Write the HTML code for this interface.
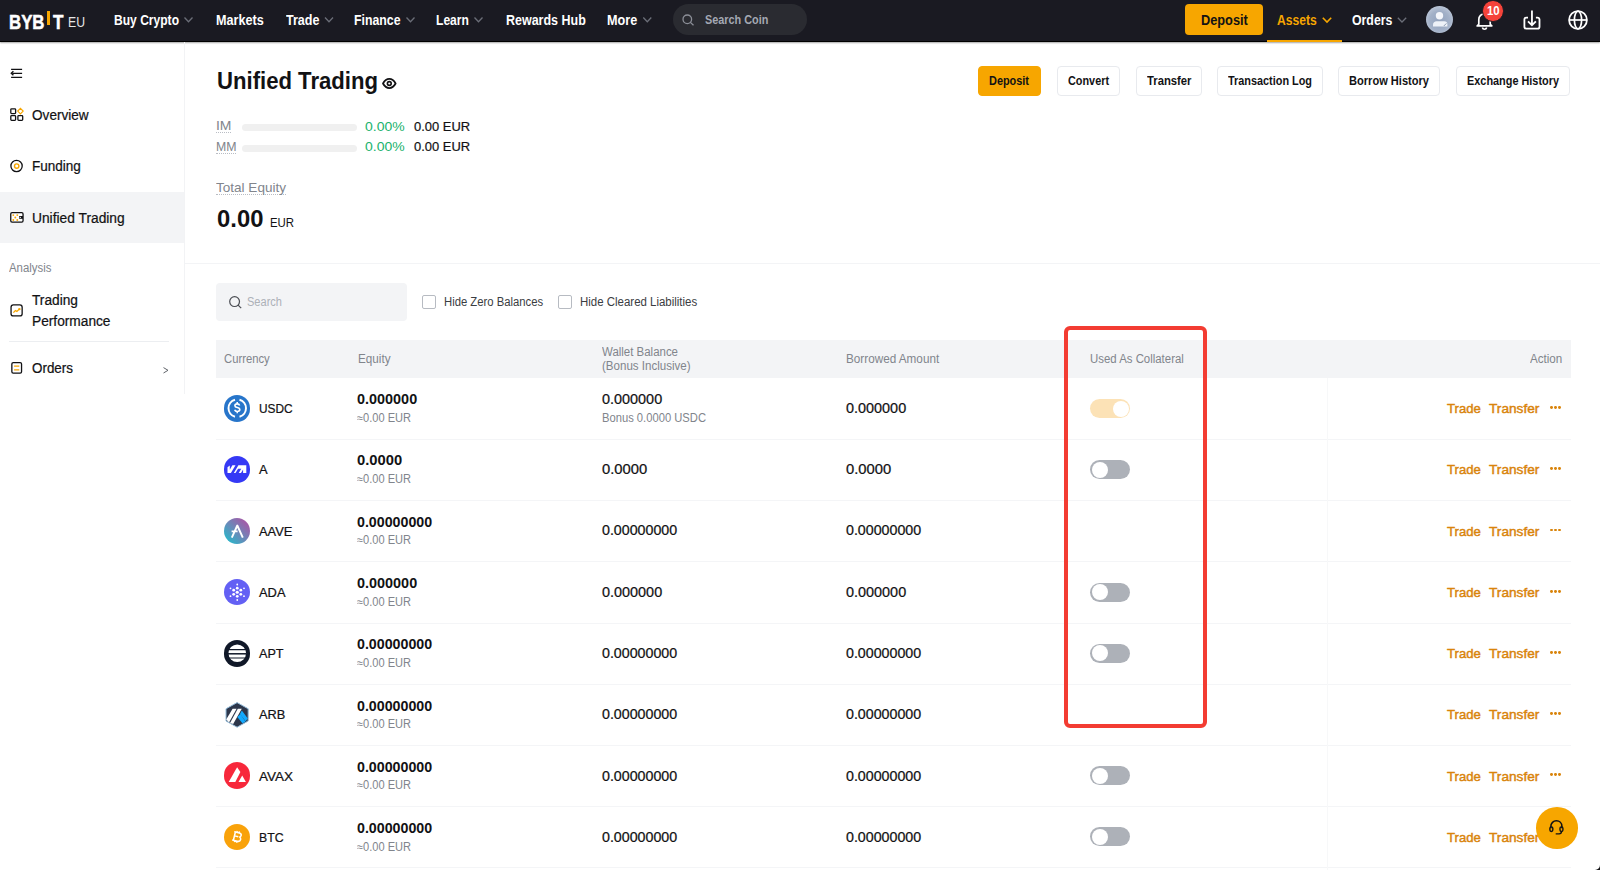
<!DOCTYPE html>
<html><head><meta charset="utf-8">
<style>
*{box-sizing:border-box;margin:0;padding:0}
html,body{width:1600px;height:870px;overflow:hidden;background:#fff}
body{position:relative;font-family:"Liberation Sans",sans-serif;color:#121214}
.a{position:absolute}
.t{position:absolute;white-space:nowrap;line-height:1;transform-origin:0 0}
svg{position:absolute;overflow:visible}
.hdr{left:0;top:0;width:1600px;height:42px;background:#1a1a22;border-bottom:1.3px solid #000;box-shadow:0 1px 1.5px rgba(0,0,0,.35)}
.chev{fill:none;stroke:#6b6e78;stroke-width:1.3}
.btn{position:absolute;top:65.8px;height:30px;border:1px solid #e8eaee;border-radius:4px;background:#fff}
.rowline{position:absolute;left:216px;width:1355px;height:1px;background:#f4f5f7}
.tg{position:absolute;left:1090px;width:40px;height:19px;border-radius:10px;background:#adb1b8}
.tg::after{content:"";position:absolute;left:1.5px;top:1.5px;width:16px;height:16px;border-radius:50%;background:#fff}
.tg.on{background:#fce2b6}
.tg.on::after{left:22.5px}
.coin{position:absolute;left:223.5px;width:26.5px;height:26.5px;border-radius:50%}
.dots{position:absolute;left:1550px;width:12px;height:3px}
.dots i{position:absolute;top:0;width:2.8px;height:2.8px;border-radius:50%;background:#d9840b}
.cb{position:absolute;top:295.3px;width:13.8px;height:13.5px;border:1px solid #b7bbc2;border-radius:2px}
.dotline{position:absolute;height:1px;border-top:1px dotted #b9bdc4}
</style></head>
<body>
<!-- header -->
<div class="a hdr"></div>
<div class="a" style="left:47.3px;top:10.9px;width:2.6px;height:13.9px;background:#f7a600"></div>
<svg style="left:0;top:0" width="1600" height="42">
  <polyline class="chev" points="184.5,17.5 188.5,21.8 192.5,17.5"/>
  <polyline class="chev" points="325,17.5 329,21.8 333,17.5"/>
  <polyline class="chev" points="406.5,17.5 410.5,21.8 414.5,17.5"/>
  <polyline class="chev" points="474.5,17.5 478.5,21.8 482.5,17.5"/>
  <polyline class="chev" points="643.3,17.5 647.3,21.8 651.3,17.5"/>
  <polyline class="chev" style="stroke:#f7a600;stroke-width:1.6" points="1322.8,17.8 1327,22 1331.2,17.8"/>
  <polyline class="chev" points="1397.8,17.8 1402,22 1406.2,17.8"/>
</svg>
<div class="a" style="left:673.4px;top:4.2px;width:133.8px;height:30.7px;border-radius:16px;background:#2a2b31"></div>
<svg style="left:682px;top:13.5px" width="13" height="12" viewBox="0 0 13 12"><circle cx="5.3" cy="5.3" r="4.3" fill="none" stroke="#8c8f98" stroke-width="1.3"/><line x1="8.4" y1="8.4" x2="11.5" y2="11.3" stroke="#8c8f98" stroke-width="1.3"/></svg>
<div class="a" style="left:1185.2px;top:4.2px;width:78.3px;height:31px;border-radius:4px;background:#f7a600"></div>
<div class="a" style="left:1267px;top:39.5px;width:75px;height:2.5px;background:#f7a600"></div>
<!-- avatar -->
<div class="a" style="left:1426.2px;top:6.2px;width:27px;height:27px;border-radius:50%;background:radial-gradient(circle at 50% 55%,#93a3bd 0%,#a3b1c8 50%,#d3dbe7 100%)"></div>
<svg style="left:1426.2px;top:6.2px" width="27" height="27" viewBox="0 0 27 27"><circle cx="13.5" cy="9.7" r="3.7" fill="#f4f6fb"/><path d="M7 20.5v-1.8c0-2 1.6-3.5 3.6-3.5h7.6c2 0 3.2 1.2 3.2 2.8v2.5z" fill="#eef2f8"/><path d="M17.8 20l2.6-2.6" stroke="#8d9bb2" stroke-width="1"/></svg>
<!-- bell -->
<svg style="left:1474.6px;top:10px" width="19" height="20" viewBox="0 0 19 20"><path d="M3.8 14.3V9.5a5.7 5.7 0 0 1 11.4 0v4.8l1.6 1.6H2.2z" fill="none" stroke="#fff" stroke-width="1.7" stroke-linejoin="round"/><path d="M7.3 17.6a2.3 2.3 0 0 0 4.4 0" fill="none" stroke="#fff" stroke-width="1.6"/></svg>
<div class="a" style="left:1482.2px;top:0px;width:21.5px;height:21.5px;border-radius:50%;background:#f5433a;border:1.2px solid #1a1a22"></div>
<!-- download -->
<svg style="left:1523px;top:10px" width="19" height="20" viewBox="0 0 19 20"><path d="M5 7.6H3.4a2 2 0 0 0-2 2v7.1a2 2 0 0 0 2 2h11.1a2 2 0 0 0 2-2v-7.1a2 2 0 0 0-2-2h-1.6" fill="none" stroke="#fff" stroke-width="1.8"/><path d="M8.95 0.6v14.4M5 11.3l3.95 3.95 3.95-3.95" fill="none" stroke="#fff" stroke-width="1.8"/></svg>
<!-- globe -->
<svg style="left:1568px;top:9.8px" width="20" height="20" viewBox="0 0 20 20"><circle cx="10" cy="10" r="8.9" fill="none" stroke="#fff" stroke-width="1.8"/><ellipse cx="10" cy="10" rx="3.6" ry="8.9" fill="none" stroke="#fff" stroke-width="1.7"/><path d="M1.5 10h17" stroke="#fff" stroke-width="1.7"/></svg>

<!-- sidebar -->
<div class="a" style="left:184px;top:42px;width:1px;height:352px;background:#f2f3f5"></div>
<div class="a" style="left:0;top:192px;width:184px;height:51.3px;background:#f3f4f6"></div>
<svg style="left:0;top:0" width="184" height="400" viewBox="0 0 184 400" fill="none" stroke-width="1.3">
<path d="M11.1 69.4h11M12.3 73.3h9.8M11.1 77.3h11" stroke="#121214" stroke-width="1.3"/>
<path d="M13.4 71.3L11.3 73.3 13.4 75.3" stroke="#121214" stroke-width="1.4"/>
<rect x="10.8" y="108.8" width="4.8" height="4.8" rx="0.8" stroke="#121214"/>
<rect x="10.8" y="115.6" width="4.8" height="4.8" rx="0.8" stroke="#121214"/>
<rect x="17.9" y="115.6" width="4.8" height="4.8" rx="0.8" stroke="#121214"/>
<path d="M20.45 108.3l2.7 2.75-2.7 2.75-2.7-2.75z" stroke="#f7a600" stroke-width="1.2"/>
<circle cx="16.55" cy="166" r="5.65" stroke="#121214"/>
<circle cx="16.7" cy="166.1" r="2.2" stroke="#f7a600" stroke-width="1.4"/>
<rect x="10.75" y="212.65" width="12.3" height="9.4" rx="1.3" stroke="#121214" fill="#fff"/>
<path d="M19.2 216h3.8v2.8h-3.8z" fill="#121214" stroke="none"/>
<circle cx="20.3" cy="217.4" r="0.6" fill="#fff" stroke="none"/>
<g fill="#f7a600" stroke="none"><circle cx="13.3" cy="215.1" r="0.95"/><circle cx="17.3" cy="215.1" r="0.95"/><circle cx="15.3" cy="217.5" r="0.95"/><circle cx="13.3" cy="220" r="0.95"/><circle cx="17.3" cy="220" r="0.95"/></g>
<rect x="11.05" y="304.85" width="11.1" height="11.1" rx="2.3" stroke="#121214"/>
<path d="M13.4 312.6l2-2.1 1.5 1 2.4-2.4" stroke="#f7a600" stroke-width="1.3"/>
<circle cx="19.4" cy="309.1" r="1.2" fill="#f7a600" stroke="none"/>
<rect x="11.85" y="362.55" width="9.7" height="10.6" rx="1.4" stroke="#121214"/>
<path d="M14.1 366.1h5.2M14.1 369.9h5.2" stroke="#f7a600" stroke-width="1.4"/>
<path d="M163.5 367.6l4.5 2.7-4.5 2.7" stroke="#5f6369" stroke-width="1"/>
</svg>
<div class="a" style="left:9px;top:340.8px;width:160px;height:1px;background:#eceef1"></div>
<!-- summary -->
<svg style="left:381.5px;top:78px" width="15" height="11" viewBox="0 0 15 11"><path d="M1 5.5C2.7 2.4 4.9 0.9 7.3 0.9s4.6 1.5 6.3 4.6C11.9 8.6 9.7 10.1 7.3 10.1S2.7 8.6 1 5.5z" fill="none" stroke="#121214" stroke-width="1.8" stroke-linejoin="round"/><circle cx="7.3" cy="5.5" r="1.9" fill="none" stroke="#121214" stroke-width="1.6"/></svg>
<div class="a" style="left:242px;top:123.5px;width:115px;height:7.5px;border-radius:4px;background:#f0f0f0"></div>
<div class="a" style="left:242px;top:144.5px;width:115px;height:7.5px;border-radius:4px;background:#f0f0f0"></div>
<div class="dotline" style="left:216px;top:132px;width:14.5px"></div>
<div class="dotline" style="left:216px;top:153px;width:20px"></div>
<div class="dotline" style="left:216px;top:194px;width:70px"></div>
<div class="btn" style="left:977.7px;width:63.5px;background:#f7a600;border-color:#f7a600"></div>
<div class="btn" style="left:1056.5px;width:63.8px"></div>
<div class="btn" style="left:1136px;width:66.4px"></div>
<div class="btn" style="left:1217.2px;width:106px"></div>
<div class="btn" style="left:1338.4px;width:102px"></div>
<div class="btn" style="left:1456px;width:114px"></div>
<div class="a" style="left:185px;top:263px;width:1415px;height:1px;background:#f3f4f6"></div>

<!-- toolbar -->
<div class="a" style="left:216px;top:283.3px;width:191px;height:37.5px;border-radius:4px;background:#f3f4f6"></div>
<svg style="left:228.8px;top:295.8px" width="13" height="13" viewBox="0 0 13 13"><circle cx="5.6" cy="5.6" r="4.9" fill="none" stroke="#4a4d53" stroke-width="1.2"/><line x1="9.1" y1="9.1" x2="12.2" y2="12.2" stroke="#4a4d53" stroke-width="1.2"/></svg>
<div class="cb" style="left:421.9px"></div>
<div class="cb" style="left:558.2px"></div>

<!-- table -->
<div class="a" style="left:216px;top:340px;width:1355px;height:38px;background:#f3f4f6"></div>
<div class="rowline" style="top:439.0px"></div>
<div class="rowline" style="top:500.2px"></div>
<div class="rowline" style="top:561.4px"></div>
<div class="rowline" style="top:622.6px"></div>
<div class="rowline" style="top:683.8px"></div>
<div class="rowline" style="top:745.0px"></div>
<div class="rowline" style="top:806.2px"></div>
<div class="rowline" style="top:867.4px"></div>
<div class="a" style="left:1326.5px;top:378px;width:1px;height:492px;background:#f7f8f9"></div>

<!-- coins -->
<div class="coin" style="top:395.2px;background:#2775ca"></div>
<svg style="left:223.5px;top:395.2px" width="26.5" height="26.5" viewBox="0 0 26.5 26.5"><path d="M11 4.8A8.75 8.75 0 0 0 11 21.7M15.5 4.8A8.75 8.75 0 0 1 15.5 21.7" fill="none" stroke="#fff" stroke-width="2"/><path d="M15.6 10.5c-.3-1-1.2-1.6-2.4-1.6-1.3 0-2.3.7-2.3 1.8s.9 1.5 2.4 1.8c1.6.4 2.5.9 2.5 2.1 0 1.2-1.1 1.9-2.5 1.9-1.3 0-2.3-.6-2.6-1.7M13.2 7.1v1.8M13.2 16.5v1.8" fill="none" stroke="#fff" stroke-width="1.6"/></svg>

<div class="coin" style="top:456.4px;background:#3539f5"></div>
<svg style="left:223.5px;top:456.4px" width="26.5" height="26.5" viewBox="0 0 26.5 26.5" fill="#fff"><path d="M3.5 11.2l2.3-1.8v4.3l2.6-4.5h3.1l-4.6 7.9H3.5z"/><path d="M9.8 17.1l4.6-7.9h7.9v7.9h-3.2v-3.6l-2.1 3.6z"/><path d="M11.5 17.1l2.6-4.4h3.2l-2.6 4.4z" fill="#3539f5"/></svg>

<div class="coin" style="top:517.6px;background:linear-gradient(45deg,#1fbdcc 5%,#6d87b8 50%,#b34ea3 95%)"></div>
<svg style="left:223.5px;top:517.6px" width="26.5" height="26.5" viewBox="0 0 26.5 26.5"><path d="M7.8 19.6L13.3 7.5 18.8 19.6M7.6 13.4h6" fill="none" stroke="#fff" stroke-width="1.9" stroke-linejoin="round"/></svg>

<div class="coin" style="top:578.8px;background:#6360f4"></div>
<svg style="left:223.5px;top:578.8px" width="26.5" height="26.5" viewBox="0 0 26.5 26.5" fill="#fff"><circle cx="13.25" cy="13.25" r="1.6"/><circle cx="13.25" cy="9.2" r="1.4"/><circle cx="13.25" cy="17.3" r="1.4"/><circle cx="9.7" cy="11.2" r="1.4"/><circle cx="16.8" cy="11.2" r="1.4"/><circle cx="9.7" cy="15.3" r="1.4"/><circle cx="16.8" cy="15.3" r="1.4"/><circle cx="13.25" cy="5.5" r=".9"/><circle cx="13.25" cy="21" r=".9"/><circle cx="6.5" cy="9.3" r=".9"/><circle cx="20" cy="9.3" r=".9"/><circle cx="6.5" cy="17.2" r=".9"/><circle cx="20" cy="17.2" r=".9"/></svg>

<div class="coin" style="top:640.0px;background:#101828"></div>
<svg style="left:223.5px;top:640.0px" width="26.5" height="26.5" viewBox="0 0 26.5 26.5"><circle cx="13.25" cy="13.25" r="8.8" fill="#fff"/><path d="M4 9.6h18.5M4 18h18.5" stroke="#101828" stroke-width="1.2"/><path d="M4 13.8h18.5" stroke="#101828" stroke-width="1.5"/></svg>

<svg style="left:223.5px;top:701.2px" width="26.5" height="26.5" viewBox="0 0 26.5 26.5"><path d="M13.1 1.6L24.2 7.8V20L13.1 26.2 2 20V7.8z" fill="#2d374b" stroke="#96bedc" stroke-width="1"/><path d="M8.6 7.8h4L5 21.5 2.2 18.5z" fill="#fff"/><path d="M13.8 7.8h4L9.2 23 6 22z" fill="#fff"/><path d="M17.8 9.4l6 8.2-2.3 2.7-5.5-7.4z" fill="#12aaff"/><path d="M13.3 16.1l3.1-3.2 5.1 7.8-3.1 1.6z" fill="#12aaff"/></svg>

<div class="coin" style="top:762.4px;background:#f7283b"></div>
<svg style="left:223.5px;top:762.4px" width="26.5" height="26.5" viewBox="0 0 26.5 26.5" fill="#fff"><path d="M13.1 5.2L16.4 10.1 11.3 19.9H4.7z"/><path d="M18.2 13.6L21.9 19.9H14.5z"/></svg>

<div class="coin" style="top:823.6px;background:#f9a20a"></div>
<svg style="left:223.5px;top:823.6px" width="26.5" height="26.5" viewBox="0 0 26.5 26.5"><g transform="rotate(14 13.25 13.25)"><path d="M10.2 8.6h3.9c1.6 0 2.5.8 2.5 2 0 1-.6 1.6-1.4 1.8 1.1.2 1.9 1 1.9 2.2 0 1.5-1.1 2.5-2.8 2.5h-4.1zM10.2 12.6h4M11.7 7v1.6M13.9 7v1.6M11.7 17.1v1.6M13.9 17.1v1.6M9 8.6h1.5M9 17.1h1.5" fill="none" stroke="#fff" stroke-width="1.5"/></g></svg>

<!-- toggles -->
<div class="tg on" style="top:399.0px"></div>
<div class="tg" style="top:460.2px"></div>
<div class="tg" style="top:582.6px"></div>
<div class="tg" style="top:643.8px"></div>
<div class="tg" style="top:766.2px"></div>
<div class="tg" style="top:827.4px"></div>

<!-- dots -->
<div class="dots" style="top:406.2px"><i style="left:0"></i><i style="left:4.2px"></i><i style="left:8.4px"></i></div>
<div class="dots" style="top:467.4px"><i style="left:0"></i><i style="left:4.2px"></i><i style="left:8.4px"></i></div>
<div class="dots" style="top:528.6px"><i style="left:0"></i><i style="left:4.2px"></i><i style="left:8.4px"></i></div>
<div class="dots" style="top:589.8px"><i style="left:0"></i><i style="left:4.2px"></i><i style="left:8.4px"></i></div>
<div class="dots" style="top:651.0px"><i style="left:0"></i><i style="left:4.2px"></i><i style="left:8.4px"></i></div>
<div class="dots" style="top:712.2px"><i style="left:0"></i><i style="left:4.2px"></i><i style="left:8.4px"></i></div>
<div class="dots" style="top:773.4px"><i style="left:0"></i><i style="left:4.2px"></i><i style="left:8.4px"></i></div>
<div class="dots" style="top:834.6px"><i style="left:0"></i><i style="left:4.2px"></i><i style="left:8.4px"></i></div>

<span class="t" id="t0" style="left:113.80px;top:12.65px;font-size:14px;color:#ffffff;font-weight:700;transform:scaleX(0.8615);">Buy Crypto</span>
<span class="t" id="t1" style="left:216.30px;top:12.65px;font-size:14px;color:#ffffff;font-weight:700;transform:scaleX(0.9013);">Markets</span>
<span class="t" id="t2" style="left:285.50px;top:12.65px;font-size:14px;color:#ffffff;font-weight:700;transform:scaleX(0.8967);">Trade</span>
<span class="t" id="t3" style="left:354.20px;top:12.65px;font-size:14px;color:#ffffff;font-weight:700;transform:scaleX(0.8789);">Finance</span>
<span class="t" id="t4" style="left:435.70px;top:12.65px;font-size:14px;color:#ffffff;font-weight:700;transform:scaleX(0.8630);">Learn</span>
<span class="t" id="t5" style="left:505.80px;top:12.65px;font-size:14px;color:#ffffff;font-weight:700;transform:scaleX(0.8919);">Rewards Hub</span>
<span class="t" id="t6" style="left:606.80px;top:12.65px;font-size:14px;color:#ffffff;font-weight:700;transform:scaleX(0.9028);">More</span>
<span class="t" id="t7" style="left:704.80px;top:14.14px;font-size:12px;color:#a4a8b3;font-weight:700;transform:scaleX(0.9039);">Search Coin</span>
<span class="t" id="t8" style="left:1201.40px;top:12.85px;font-size:14px;color:#121214;font-weight:700;transform:scaleX(0.9115);">Deposit</span>
<span class="t" id="t9" style="left:1277.20px;top:12.65px;font-size:14px;color:#f7a600;font-weight:700;transform:scaleX(0.8645);">Assets</span>
<span class="t" id="t10" style="left:1351.70px;top:12.65px;font-size:14px;color:#ffffff;font-weight:700;transform:scaleX(0.8798);">Orders</span>
<span class="t" id="t11" style="left:8.80px;top:11.69px;font-size:20.8px;color:#ffffff;font-weight:700;-webkit-text-stroke:0.5px #ffffff;transform:scaleX(0.8083);">BYB</span>
<span class="t" id="t12" style="left:52.50px;top:11.69px;font-size:20.8px;color:#ffffff;font-weight:700;-webkit-text-stroke:0.5px #ffffff;transform:scaleX(0.8256);">T</span>
<span class="t" id="t13" style="left:68.20px;top:14.30px;font-size:15px;color:#e6e6e6;transform:scaleX(0.8156);">EU</span>
<span class="t" id="t14" style="left:1486.60px;top:4.74px;font-size:12px;color:#ffffff;font-weight:700;transform:scaleX(0.9506);">10</span>
<span class="t" id="t15" style="left:32.30px;top:107.95px;font-size:14px;color:#121214;-webkit-text-stroke:0.22px #121214;transform:scaleX(0.9716);">Overview</span>
<span class="t" id="t16" style="left:32.30px;top:159.35px;font-size:14px;color:#121214;-webkit-text-stroke:0.22px #121214;transform:scaleX(0.9665);">Funding</span>
<span class="t" id="t17" style="left:32.30px;top:211.25px;font-size:14px;color:#121214;-webkit-text-stroke:0.22px #121214;transform:scaleX(0.9844);">Unified Trading</span>
<span class="t" id="t18" style="left:8.90px;top:261.54px;font-size:12px;color:#81858c;transform:scaleX(0.9488);">Analysis</span>
<span class="t" id="t19" style="left:32.00px;top:293.35px;font-size:14px;color:#121214;-webkit-text-stroke:0.22px #121214;transform:scaleX(0.9797);">Trading</span>
<span class="t" id="t20" style="left:32.00px;top:314.15px;font-size:14px;color:#121214;-webkit-text-stroke:0.22px #121214;transform:scaleX(0.9793);">Performance</span>
<span class="t" id="t21" style="left:32.00px;top:361.15px;font-size:14px;color:#121214;-webkit-text-stroke:0.22px #121214;transform:scaleX(0.9580);">Orders</span>
<span class="t" id="t22" style="left:216.50px;top:69.08px;font-size:24px;color:#121214;font-weight:700;transform:scaleX(0.9217);">Unified Trading</span>
<span class="t" id="t23" style="left:216.00px;top:119.49px;font-size:13px;color:#81858c;transform:scaleX(1.0724);">IM</span>
<span class="t" id="t24" style="left:216.00px;top:140.29px;font-size:13px;color:#81858c;transform:scaleX(0.9459);">MM</span>
<span class="t" id="t25" style="left:365.20px;top:119.69px;font-size:13px;color:#20b26c;transform:scaleX(1.0739);">0.00%</span>
<span class="t" id="t26" style="left:413.50px;top:119.69px;font-size:13px;color:#121214;-webkit-text-stroke:0.2px #121214;transform:scaleX(0.9951);">0.00 EUR</span>
<span class="t" id="t27" style="left:365.20px;top:140.49px;font-size:13px;color:#20b26c;transform:scaleX(1.0739);">0.00%</span>
<span class="t" id="t28" style="left:413.50px;top:140.49px;font-size:13px;color:#121214;-webkit-text-stroke:0.2px #121214;transform:scaleX(0.9951);">0.00 EUR</span>
<span class="t" id="t29" style="left:215.90px;top:180.89px;font-size:13px;color:#81858c;transform:scaleX(1.0416);">Total Equity</span>
<span class="t" id="t30" style="left:216.50px;top:207.83px;font-size:23px;color:#121214;font-weight:700;transform:scaleX(1.0365);">0.00</span>
<span class="t" id="t31" style="left:270.20px;top:215.99px;font-size:13px;color:#121214;transform:scaleX(0.8779);">EUR</span>
<span class="t" id="t32" style="left:989.45px;top:74.54px;font-size:12px;color:#121214;font-weight:700;transform:scaleX(0.9088);">Deposit</span>
<span class="t" id="t33" style="left:1067.90px;top:74.54px;font-size:12px;color:#121214;font-weight:700;transform:scaleX(0.9042);">Convert</span>
<span class="t" id="t34" style="left:1146.95px;top:74.54px;font-size:12px;color:#121214;font-weight:700;transform:scaleX(0.9396);">Transfer</span>
<span class="t" id="t35" style="left:1228.20px;top:74.54px;font-size:12px;color:#121214;font-weight:700;transform:scaleX(0.9063);">Transaction Log</span>
<span class="t" id="t36" style="left:1349.40px;top:74.54px;font-size:12px;color:#121214;font-weight:700;transform:scaleX(0.9229);">Borrow History</span>
<span class="t" id="t37" style="left:1467.00px;top:74.54px;font-size:12px;color:#121214;font-weight:700;transform:scaleX(0.9075);">Exchange History</span>
<span class="t" id="t38" style="left:246.90px;top:296.14px;font-size:12px;color:#adb1b8;transform:scaleX(0.9203);">Search</span>
<span class="t" id="t39" style="left:443.60px;top:296.04px;font-size:12px;color:#3a3d42;transform:scaleX(0.9413);">Hide Zero Balances</span>
<span class="t" id="t40" style="left:580.00px;top:296.04px;font-size:12px;color:#3a3d42;transform:scaleX(0.9549);">Hide Cleared Liabilities</span>
<span class="t" id="t41" style="left:224.00px;top:353.04px;font-size:12px;color:#81858c;transform:scaleX(0.9386);">Currency</span>
<span class="t" id="t42" style="left:357.60px;top:353.04px;font-size:12px;color:#81858c;transform:scaleX(0.9742);">Equity</span>
<span class="t" id="t43" style="left:601.60px;top:346.14px;font-size:12px;color:#81858c;transform:scaleX(0.9548);">Wallet Balance</span>
<span class="t" id="t44" style="left:601.60px;top:359.54px;font-size:12px;color:#81858c;transform:scaleX(0.9626);">(Bonus Inclusive)</span>
<span class="t" id="t45" style="left:845.80px;top:352.64px;font-size:12px;color:#81858c;transform:scaleX(0.9770);">Borrowed Amount</span>
<span class="t" id="t46" style="left:1090.20px;top:352.84px;font-size:12px;color:#81858c;transform:scaleX(0.9502);">Used As Collateral</span>
<span class="t" id="t47" style="left:1530.20px;top:353.34px;font-size:12px;color:#81858c;transform:scaleX(0.9682);">Action</span>
<span class="t" id="t48" style="left:258.70px;top:402.09px;font-size:13px;color:#121214;-webkit-text-stroke:0.22px #121214;transform:scaleX(0.9120);">USDC</span>
<span class="t" id="t49" style="left:357.40px;top:393.22px;font-size:13.8px;color:#121214;font-weight:700;transform:scaleX(1.0454);">0.000000</span>
<span class="t" id="t50" style="left:357.40px;top:411.84px;font-size:12px;color:#81858c;transform:scaleX(0.9211);">≈0.00 EUR</span>
<span class="t" id="t51" style="left:601.60px;top:393.22px;font-size:13.8px;color:#121214;-webkit-text-stroke:0.22px #121214;transform:scaleX(1.0454);">0.000000</span>
<span class="t" id="t52" style="left:601.60px;top:411.64px;font-size:12px;color:#81858c;transform:scaleX(0.9335);">Bonus 0.0000 USDC</span>
<span class="t" id="t53" style="left:845.80px;top:401.92px;font-size:13.8px;color:#121214;-webkit-text-stroke:0.22px #121214;transform:scaleX(1.0454);">0.000000</span>
<span class="t" id="t54" style="left:1447.20px;top:402.07px;font-size:13.5px;color:#d9840b;-webkit-text-stroke:0.45px #d9840b;transform:scaleX(0.9722);">Trade</span>
<span class="t" id="t55" style="left:1489.40px;top:402.07px;font-size:13.5px;color:#d9840b;-webkit-text-stroke:0.45px #d9840b;transform:scaleX(1.0127);">Transfer</span>
<span class="t" id="t56" style="left:258.70px;top:463.36px;font-size:13px;color:#121214;-webkit-text-stroke:0.22px #121214;transform:scaleX(0.9917);">A</span>
<span class="t" id="t57" style="left:357.40px;top:454.49px;font-size:13.8px;color:#121214;font-weight:700;transform:scaleX(1.0691);">0.0000</span>
<span class="t" id="t58" style="left:357.40px;top:473.11px;font-size:12px;color:#81858c;transform:scaleX(0.9211);">≈0.00 EUR</span>
<span class="t" id="t59" style="left:601.60px;top:463.19px;font-size:13.8px;color:#121214;-webkit-text-stroke:0.22px #121214;transform:scaleX(1.0691);">0.0000</span>
<span class="t" id="t60" style="left:845.80px;top:463.19px;font-size:13.8px;color:#121214;-webkit-text-stroke:0.22px #121214;transform:scaleX(1.0691);">0.0000</span>
<span class="t" id="t61" style="left:1447.20px;top:463.34px;font-size:13.5px;color:#d9840b;-webkit-text-stroke:0.45px #d9840b;transform:scaleX(0.9722);">Trade</span>
<span class="t" id="t62" style="left:1489.40px;top:463.34px;font-size:13.5px;color:#d9840b;-webkit-text-stroke:0.45px #d9840b;transform:scaleX(1.0127);">Transfer</span>
<span class="t" id="t63" style="left:258.70px;top:524.63px;font-size:13px;color:#121214;-webkit-text-stroke:0.22px #121214;transform:scaleX(0.9905);">AAVE</span>
<span class="t" id="t64" style="left:357.40px;top:515.76px;font-size:13.8px;color:#121214;font-weight:700;transform:scaleX(1.0315);">0.00000000</span>
<span class="t" id="t65" style="left:357.40px;top:534.38px;font-size:12px;color:#81858c;transform:scaleX(0.9211);">≈0.00 EUR</span>
<span class="t" id="t66" style="left:601.60px;top:524.46px;font-size:13.8px;color:#121214;-webkit-text-stroke:0.22px #121214;transform:scaleX(1.0315);">0.00000000</span>
<span class="t" id="t67" style="left:845.80px;top:524.46px;font-size:13.8px;color:#121214;-webkit-text-stroke:0.22px #121214;transform:scaleX(1.0315);">0.00000000</span>
<span class="t" id="t68" style="left:1447.20px;top:524.61px;font-size:13.5px;color:#d9840b;-webkit-text-stroke:0.45px #d9840b;transform:scaleX(0.9722);">Trade</span>
<span class="t" id="t69" style="left:1489.40px;top:524.61px;font-size:13.5px;color:#d9840b;-webkit-text-stroke:0.45px #d9840b;transform:scaleX(1.0127);">Transfer</span>
<span class="t" id="t70" style="left:258.70px;top:585.90px;font-size:13px;color:#121214;-webkit-text-stroke:0.22px #121214;transform:scaleX(0.9912);">ADA</span>
<span class="t" id="t71" style="left:357.40px;top:577.03px;font-size:13.8px;color:#121214;font-weight:700;transform:scaleX(1.0454);">0.000000</span>
<span class="t" id="t72" style="left:357.40px;top:595.65px;font-size:12px;color:#81858c;transform:scaleX(0.9211);">≈0.00 EUR</span>
<span class="t" id="t73" style="left:601.60px;top:585.73px;font-size:13.8px;color:#121214;-webkit-text-stroke:0.22px #121214;transform:scaleX(1.0454);">0.000000</span>
<span class="t" id="t74" style="left:845.80px;top:585.73px;font-size:13.8px;color:#121214;-webkit-text-stroke:0.22px #121214;transform:scaleX(1.0454);">0.000000</span>
<span class="t" id="t75" style="left:1447.20px;top:585.88px;font-size:13.5px;color:#d9840b;-webkit-text-stroke:0.45px #d9840b;transform:scaleX(0.9722);">Trade</span>
<span class="t" id="t76" style="left:1489.40px;top:585.88px;font-size:13.5px;color:#d9840b;-webkit-text-stroke:0.45px #d9840b;transform:scaleX(1.0127);">Transfer</span>
<span class="t" id="t77" style="left:258.70px;top:647.17px;font-size:13px;color:#121214;-webkit-text-stroke:0.22px #121214;transform:scaleX(0.9725);">APT</span>
<span class="t" id="t78" style="left:357.40px;top:638.30px;font-size:13.8px;color:#121214;font-weight:700;transform:scaleX(1.0315);">0.00000000</span>
<span class="t" id="t79" style="left:357.40px;top:656.92px;font-size:12px;color:#81858c;transform:scaleX(0.9211);">≈0.00 EUR</span>
<span class="t" id="t80" style="left:601.60px;top:647.00px;font-size:13.8px;color:#121214;-webkit-text-stroke:0.22px #121214;transform:scaleX(1.0315);">0.00000000</span>
<span class="t" id="t81" style="left:845.80px;top:647.00px;font-size:13.8px;color:#121214;-webkit-text-stroke:0.22px #121214;transform:scaleX(1.0315);">0.00000000</span>
<span class="t" id="t82" style="left:1447.20px;top:647.15px;font-size:13.5px;color:#d9840b;-webkit-text-stroke:0.45px #d9840b;transform:scaleX(0.9722);">Trade</span>
<span class="t" id="t83" style="left:1489.40px;top:647.15px;font-size:13.5px;color:#d9840b;-webkit-text-stroke:0.45px #d9840b;transform:scaleX(1.0127);">Transfer</span>
<span class="t" id="t84" style="left:258.70px;top:708.44px;font-size:13px;color:#121214;-webkit-text-stroke:0.22px #121214;transform:scaleX(0.9838);">ARB</span>
<span class="t" id="t85" style="left:357.40px;top:699.57px;font-size:13.8px;color:#121214;font-weight:700;transform:scaleX(1.0315);">0.00000000</span>
<span class="t" id="t86" style="left:357.40px;top:718.19px;font-size:12px;color:#81858c;transform:scaleX(0.9211);">≈0.00 EUR</span>
<span class="t" id="t87" style="left:601.60px;top:708.27px;font-size:13.8px;color:#121214;-webkit-text-stroke:0.22px #121214;transform:scaleX(1.0315);">0.00000000</span>
<span class="t" id="t88" style="left:845.80px;top:708.27px;font-size:13.8px;color:#121214;-webkit-text-stroke:0.22px #121214;transform:scaleX(1.0315);">0.00000000</span>
<span class="t" id="t89" style="left:1447.20px;top:708.42px;font-size:13.5px;color:#d9840b;-webkit-text-stroke:0.45px #d9840b;transform:scaleX(0.9722);">Trade</span>
<span class="t" id="t90" style="left:1489.40px;top:708.42px;font-size:13.5px;color:#d9840b;-webkit-text-stroke:0.45px #d9840b;transform:scaleX(1.0127);">Transfer</span>
<span class="t" id="t91" style="left:258.70px;top:769.71px;font-size:13px;color:#121214;-webkit-text-stroke:0.22px #121214;transform:scaleX(1.0377);">AVAX</span>
<span class="t" id="t92" style="left:357.40px;top:760.84px;font-size:13.8px;color:#121214;font-weight:700;transform:scaleX(1.0315);">0.00000000</span>
<span class="t" id="t93" style="left:357.40px;top:779.46px;font-size:12px;color:#81858c;transform:scaleX(0.9211);">≈0.00 EUR</span>
<span class="t" id="t94" style="left:601.60px;top:769.54px;font-size:13.8px;color:#121214;-webkit-text-stroke:0.22px #121214;transform:scaleX(1.0315);">0.00000000</span>
<span class="t" id="t95" style="left:845.80px;top:769.54px;font-size:13.8px;color:#121214;-webkit-text-stroke:0.22px #121214;transform:scaleX(1.0315);">0.00000000</span>
<span class="t" id="t96" style="left:1447.20px;top:769.69px;font-size:13.5px;color:#d9840b;-webkit-text-stroke:0.45px #d9840b;transform:scaleX(0.9722);">Trade</span>
<span class="t" id="t97" style="left:1489.40px;top:769.69px;font-size:13.5px;color:#d9840b;-webkit-text-stroke:0.45px #d9840b;transform:scaleX(1.0127);">Transfer</span>
<span class="t" id="t98" style="left:258.70px;top:830.98px;font-size:13px;color:#121214;-webkit-text-stroke:0.22px #121214;transform:scaleX(0.9423);">BTC</span>
<span class="t" id="t99" style="left:357.40px;top:822.11px;font-size:13.8px;color:#121214;font-weight:700;transform:scaleX(1.0315);">0.00000000</span>
<span class="t" id="t100" style="left:357.40px;top:840.73px;font-size:12px;color:#81858c;transform:scaleX(0.9211);">≈0.00 EUR</span>
<span class="t" id="t101" style="left:601.60px;top:830.81px;font-size:13.8px;color:#121214;-webkit-text-stroke:0.22px #121214;transform:scaleX(1.0315);">0.00000000</span>
<span class="t" id="t102" style="left:845.80px;top:830.81px;font-size:13.8px;color:#121214;-webkit-text-stroke:0.22px #121214;transform:scaleX(1.0315);">0.00000000</span>
<span class="t" id="t103" style="left:1447.20px;top:830.96px;font-size:13.5px;color:#d9840b;-webkit-text-stroke:0.45px #d9840b;transform:scaleX(0.9722);">Trade</span>
<span class="t" id="t104" style="left:1489.40px;top:830.96px;font-size:13.5px;color:#d9840b;-webkit-text-stroke:0.45px #d9840b;transform:scaleX(1.0127);">Transfer</span>

<!-- red highlight box -->
<div class="a" style="left:1064px;top:326px;width:142.5px;height:401.5px;border:4px solid #f33c32;border-radius:6px"></div>

<!-- floating support -->
<div class="a" style="left:1536.3px;top:807px;width:41.6px;height:41.6px;border-radius:50%;background:#f7a600"></div>
<svg style="left:1549px;top:820px" width="15" height="15" viewBox="0 0 15 15"><path d="M1.9 8.2V6.3C1.9 3.1 4.3 0.8 7.4 0.8s5.5 2.3 5.5 5.5v1.9" fill="none" stroke="#121214" stroke-width="1.5"/><rect x="0.9" y="6.9" width="2.9" height="4.6" rx="1.4" fill="none" stroke="#121214" stroke-width="1.4"/><rect x="11" y="6.9" width="2.9" height="4.6" rx="1.4" fill="none" stroke="#121214" stroke-width="1.4"/><path d="M12.5 11.6c0 1.4-.9 2.3-2.4 2.3H6.7" fill="none" stroke="#121214" stroke-width="1.4"/></svg>
<svg style="left:1595px;top:865px" width="5" height="5" viewBox="0 0 5 5"><path d="M5 0V5H0A5 5 0 0 0 5 0z" fill="#121214"/></svg>
</body></html>
